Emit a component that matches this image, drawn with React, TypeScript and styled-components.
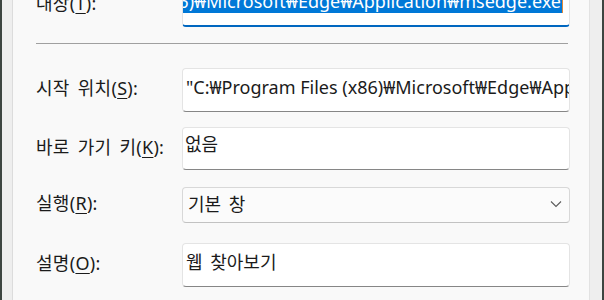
import React from "react";
import styled, { createGlobalStyle } from "styled-components";

const GlobalStyle = createGlobalStyle`
  html, body {
    margin: 0;
    padding: 0;
    overflow: hidden;
    background-color: #3d4541;
  }
`;

const Screen = styled.div`
  width: 604px;
  height: 300px;
  display: flex;
  background-color: #3d4541;
  font-family: "Noto Sans", "Noto Sans CJK KR", sans-serif;
  color: #1b1b1b;
  font-size: 18px;
`;

const Frame = styled.div<{ $w: number; $side: "left" | "right" }>`
  width: ${(p) => p.$w}px;
  background-color: #eeeeee;
  margin-${(p) => p.$side}: 2px;
`;

const Panel = styled.div`
  flex: 1;
  background-color: #f9f9f9;
  border-left: 1px solid #dcdcdc;
  border-right: 1px solid #e2e2e2;
  padding: 0 19px 0 23px;
  overflow: hidden;
  display: flex;
  flex-direction: column;
`;

const Row = styled.div<{ $top: number }>`
  display: grid;
  grid-template-columns: 146px 388px;
  align-items: center;
  margin-top: ${(p) => p.$top}px;
`;

const Label = styled.div`
  white-space: nowrap;
  line-height: 24px;
  margin-bottom: 4px;
  word-spacing: 3px;
  letter-spacing: 0.3px;
  u {
    text-underline-offset: 3px;
  }
`;

const Field = styled.div<{ $h: number; $focused?: boolean; $top?: boolean }>`
  box-sizing: border-box;
  height: ${(p) => p.$h}px;
  background-color: #ffffff;
  border: 1px solid #e4e4e4;
  border-bottom: ${(p) => (p.$focused ? "2px solid #0067c0" : "1px solid #868686")};
  border-radius: 4px;
  padding: ${(p) => (p.$top ? "4px 3px 0 2px" : p.$focused ? "0 3px 8px 3px" : "0 3px 6px 3px")};
  display: flex;
  align-items: ${(p) => (p.$top ? "flex-start" : "center")};
  justify-content: ${(p) => (p.$focused ? "flex-end" : "flex-start")};
  overflow: hidden;
  white-space: nowrap;
  line-height: 24px;
  word-spacing: ${(p) => (p.$focused ? 0 : 3)}px;
`;

const Path = styled.span`
  word-spacing: 0;
`;

const Selection = styled.span`
  background-color: #0078d7;
  color: #ffffff;
  padding-right: 1px;
  border-right: 1px solid #e08a3c;
  margin-right: 3px;
`;

const Select = styled.div`
  box-sizing: border-box;
  height: 36px;
  background-color: #fbfbfb;
  border: 1px solid #d8d8d8;
  border-bottom-color: #c2c2c2;
  border-radius: 4px;
  padding: 0 6px 2px 5px;
  display: flex;
  align-items: center;
  justify-content: space-between;
  line-height: 24px;
  word-spacing: 3px;
`;

const Chevron = styled.svg`
  width: 12px;
  height: 8px;
  margin-right: 1px;
`;

const Separator = styled.div`
  height: 1px;
  width: 532px;
  background-color: #a0a0a0;
  margin-top: 16px;
`;

export default function App() {
  return (
    <>
      <GlobalStyle />
      <Screen>
        <Frame $w={10} $side="left" />
        <Panel>
          <Row $top={-17}>
            <Label>
              대상(<u>T</u>):
            </Label>
            <Field $h={44} $focused>
              <Selection>
                "C:₩Program Files (x86)₩Microsoft₩Edge₩Application₩msedge.exe
              </Selection>
            </Field>
          </Row>
          <Separator />
          <Row $top={24}>
            <Label>
              시작 위치(<u>S</u>):
            </Label>
            <Field $h={44}>
              <Path>"C:₩Program Files (x86)₩Microsoft₩Edge₩Application"</Path>
            </Field>
          </Row>
          <Row $top={15}>
            <Label>
              바로 가기 키(<u>K</u>):
            </Label>
            <Field $h={43} $top>
              없음
            </Field>
          </Row>
          <Row $top={17}>
            <Label>
              실행(<u>R</u>):
            </Label>
            <Select>
              <span>기본 창</span>
              <Chevron viewBox="0 0 12 8">
                <polyline
                  points="1,1.5 6,6.5 11,1.5"
                  fill="none"
                  stroke="#5a5a5a"
                  strokeWidth="1.1"
                />
              </Chevron>
            </Select>
          </Row>
          <Row $top={20}>
            <Label>
              설명(<u>O</u>):
            </Label>
            <Field $h={44}>웹 찾아보기</Field>
          </Row>
        </Panel>
        <Frame $w={12} $side="right" />
      </Screen>
    </>
  );
}
